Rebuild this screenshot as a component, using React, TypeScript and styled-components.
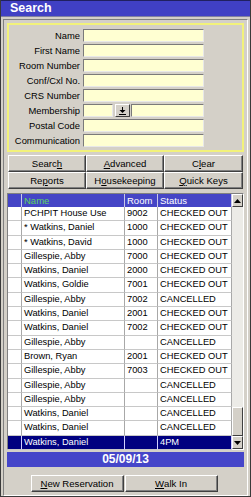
import React from "react";
import styled, { createGlobalStyle } from "styled-components";

const Global = createGlobalStyle`
  html, body { margin: 0; padding: 0; background: #d4d0c8; }
  body { font-family: "Liberation Sans", Arial, sans-serif; }
  * { box-sizing: border-box; }
`;

const FONT = `"Liberation Sans", Arial, sans-serif`;

const Window = styled.div`
  width: 251px;
  height: 497px;
  background: #d4d0c8;
  border: 1px solid #3a3a3a;
  border-top: none;
  display: flex;
  flex-direction: column;
  font-family: ${FONT};
  font-size: 9.4px;
  color: #000;
  overflow: hidden;
`;

const TitleBar = styled.div`
  height: 17px;
  background: #4040c4;
  border-top: 1px solid #202060;
  border-bottom: 1px solid #8080a0;
  color: #fff;
  font-weight: bold;
  font-size: 12.5px;
  line-height: 15px;
  padding-left: 9px;
`;

const Content = styled.div`
  flex: 1;
  padding: 2px;
  display: flex;
  flex-direction: column;
`;

const Frame = styled.div`
  flex: 1;
  border: 1px solid;
  border-color: #808080 #ffffff #ffffff #808080;
  padding: 3px;
  display: flex;
  flex-direction: column;
`;

const SearchBox = styled.div`
  height: 129px;
  border: 2px solid #f2f27a;
  padding: 4px 0 0 0;
  display: flex;
  flex-direction: column;
  gap: 2px;
`;

const FieldRow = styled.div`
  display: flex;
  align-items: center;
  height: 13px;
`;

const Label = styled.div`
  width: 74px;
  text-align: right;
  padding-right: 3px;
  white-space: nowrap;
`;

const Input = styled.div<{ $w: number }>`
  width: ${(p) => p.$w}px;
  height: 13px;
  background: #ffffd2;
  border: 1px solid;
  border-color: #7a7a7a #e8e8e8 #e8e8e8 #7a7a7a;
`;

const SmallBtn = styled.div`
  width: 15px;
  height: 13px;
  margin: 0 1px 0 2px;
  background: #d4d0c8;
  border: 1px solid;
  border-color: #ffffff #404040 #404040 #ffffff;
  display: flex;
  align-items: center;
  justify-content: center;
`;

const ButtonGrid = styled.div`
  margin: 3px 1px 0 1px;
  display: grid;
  grid-template-columns: 78px 78px 79px;
  grid-template-rows: 17px 17px;
`;

const Btn = styled.div<{ $w?: number }>`
  ${(p) => (p.$w ? `width: ${p.$w}px;` : "")}
  height: 17px;
  background: #d4d0c8;
  border: 1px solid;
  border-color: #ffffff #404040 #404040 #ffffff;
  box-shadow: inset -1px -1px 0 #808080;
  display: flex;
  align-items: center;
  justify-content: center;
  font-size: 9.6px;
  white-space: nowrap;
`;

const U = styled.span`
  text-decoration: underline;
  text-underline-offset: 1px;
`;

const GridBox = styled.div`
  margin-top: 4px;
  height: 257px;
  display: flex;
  border: 1px solid;
  border-color: #808080 #ffffff #ffffff #808080;
  background: #fff;
`;

const Table = styled.div`
  flex: 1;
  display: grid;
  grid-template-columns: 14px 103px 33px 74px;
  grid-auto-rows: 14.3px;
  grid-template-rows: 13px;
  align-content: start;
`;

const HeadCell = styled.div<{ $green?: boolean }>`
  background: #4545c6;
  color: ${(p) => (p.$green ? "#5fd35f" : "#ffffff")};
  border-right: 1px solid #c8c8e8;
  padding-left: 2px;
  line-height: 13px;
  font-size: 9.5px;
`;

const Cell = styled.div<{ $sel?: boolean }>`
  background: ${(p) => (p.$sel ? "#000080" : "#ffffff")};
  color: ${(p) => (p.$sel ? "#ffffff" : "#000000")};
  border-right: 1px solid ${(p) => (p.$sel ? "#d0d0ff" : "#a8a8a8")};
  border-bottom: 1px solid #c8c8c8;
  padding-left: 2px;
  line-height: 13.3px;
  white-space: nowrap;
  overflow: hidden;
  font-size: 9.3px;
`;

const ScrollBar = styled.div`
  width: 12px;
  display: flex;
  flex-direction: column;
  background: #e9e8e3;
`;

const ScrollBtn = styled.div`
  height: 13px;
  background: #d4d0c8;
  border: 1px solid;
  border-color: #ffffff #404040 #404040 #ffffff;
  display: flex;
  align-items: center;
  justify-content: center;
`;

const Track = styled.div`
  flex: 1;
  display: flex;
  flex-direction: column;
  justify-content: flex-end;
  background-color: #ecebe7;
`;

const Thumb = styled.div`
  height: 29px;
  background: #d4d0c8;
  border: 1px solid;
  border-color: #ffffff #404040 #404040 #ffffff;
`;

const DateBar = styled.div`
  margin-top: 2px;
  height: 15px;
  background: #4545c9;
  color: #fff;
  font-weight: bold;
  font-size: 12px;
  line-height: 15px;
  text-align: center;
`;

const BottomRow = styled.div`
  margin-top: 8px;
  display: flex;
  justify-content: center;
  gap: 1px;
  padding-right: 3px;
`;

type Row = [string, string, string];
const rows: Row[] = [
  ["PCHPIT House Use", "9002", "CHECKED OUT"],
  ["* Watkins, Daniel", "1000", "CHECKED OUT"],
  ["* Watkins, David", "1000", "CHECKED OUT"],
  ["Gillespie, Abby", "7000", "CHECKED OUT"],
  ["Watkins, Daniel", "2000", "CHECKED OUT"],
  ["Watkins, Goldie", "7001", "CHECKED OUT"],
  ["Gillespie, Abby", "7002", "CANCELLED"],
  ["Watkins, Daniel", "2001", "CHECKED OUT"],
  ["Watkins, Daniel", "7002", "CHECKED OUT"],
  ["Gillespie, Abby", "", "CANCELLED"],
  ["Brown, Ryan", "2001", "CHECKED OUT"],
  ["Gillespie, Abby", "7003", "CHECKED OUT"],
  ["Gillespie, Abby", "", "CANCELLED"],
  ["Gillespie, Abby", "", "CANCELLED"],
  ["Watkins, Daniel", "", "CANCELLED"],
  ["Watkins, Daniel", "", "CANCELLED"],
  ["Watkins, Daniel", "", "4PM"],
];

const fields = [
  "Name",
  "First Name",
  "Room Number",
  "Conf/Cxl No.",
  "CRS Number",
  "Membership",
  "Postal Code",
  "Communication",
];

const Tri = ({ up }: { up?: boolean }) => (
  <svg width="7" height="4" viewBox="0 0 7 4">
    <polygon points={up ? "3.5,0 7,4 0,4" : "0,0 7,0 3.5,4"} fill="#000" />
  </svg>
);

const DownloadIcon = () => (
  <svg width="7" height="8" viewBox="0 0 7 8">
    <rect x="3" y="0" width="1" height="4" fill="#000" />
    <polygon points="0.5,3 6.5,3 3.5,6" fill="#000" />
    <rect x="0" y="7" width="7" height="1" fill="#000" />
  </svg>
);

export default function App() {
  return (
    <>
      <Global />
      <Window>
        <TitleBar>Search</TitleBar>
        <Content>
          <Frame>
            <SearchBox>
              {fields.map((f) => (
                <FieldRow key={f}>
                  <Label>{f}</Label>
                  {f === "Membership" ? (
                    <>
                      <Input $w={30} />
                      <SmallBtn>
                        <DownloadIcon />
                      </SmallBtn>
                      <Input $w={73} />
                    </>
                  ) : (
                    <Input $w={121} />
                  )}
                </FieldRow>
              ))}
            </SearchBox>
            <ButtonGrid>
              <Btn>
                Searc<U>h</U>
              </Btn>
              <Btn>
                <U>A</U>dvanced
              </Btn>
              <Btn>
                C<U>l</U>ear
              </Btn>
              <Btn>
                Re<U>p</U>orts
              </Btn>
              <Btn>
                H<U>o</U>usekeeping
              </Btn>
              <Btn>
                <U>Q</U>uick Keys
              </Btn>
            </ButtonGrid>
            <GridBox>
              <Table>
                <HeadCell />
                <HeadCell $green>Name</HeadCell>
                <HeadCell>Room</HeadCell>
                <HeadCell>Status</HeadCell>
                {rows.map((r, i) => {
                  const sel = i === rows.length - 1;
                  return (
                    <React.Fragment key={i}>
                      <Cell $sel={sel} />
                      <Cell $sel={sel}>{r[0]}</Cell>
                      <Cell $sel={sel}>{r[1]}</Cell>
                      <Cell $sel={sel}>{r[2]}</Cell>
                    </React.Fragment>
                  );
                })}
              </Table>
              <ScrollBar>
                <ScrollBtn>
                  <Tri up />
                </ScrollBtn>
                <Track>
                  <Thumb />
                </Track>
                <ScrollBtn>
                  <Tri />
                </ScrollBtn>
              </ScrollBar>
            </GridBox>
            <DateBar>05/09/13</DateBar>
            <BottomRow>
              <Btn $w={93}>
                <U>N</U>ew Reservation
              </Btn>
              <Btn $w={93}>
                <U>W</U>alk In
              </Btn>
            </BottomRow>
          </Frame>
        </Content>
      </Window>
    </>
  );
}
